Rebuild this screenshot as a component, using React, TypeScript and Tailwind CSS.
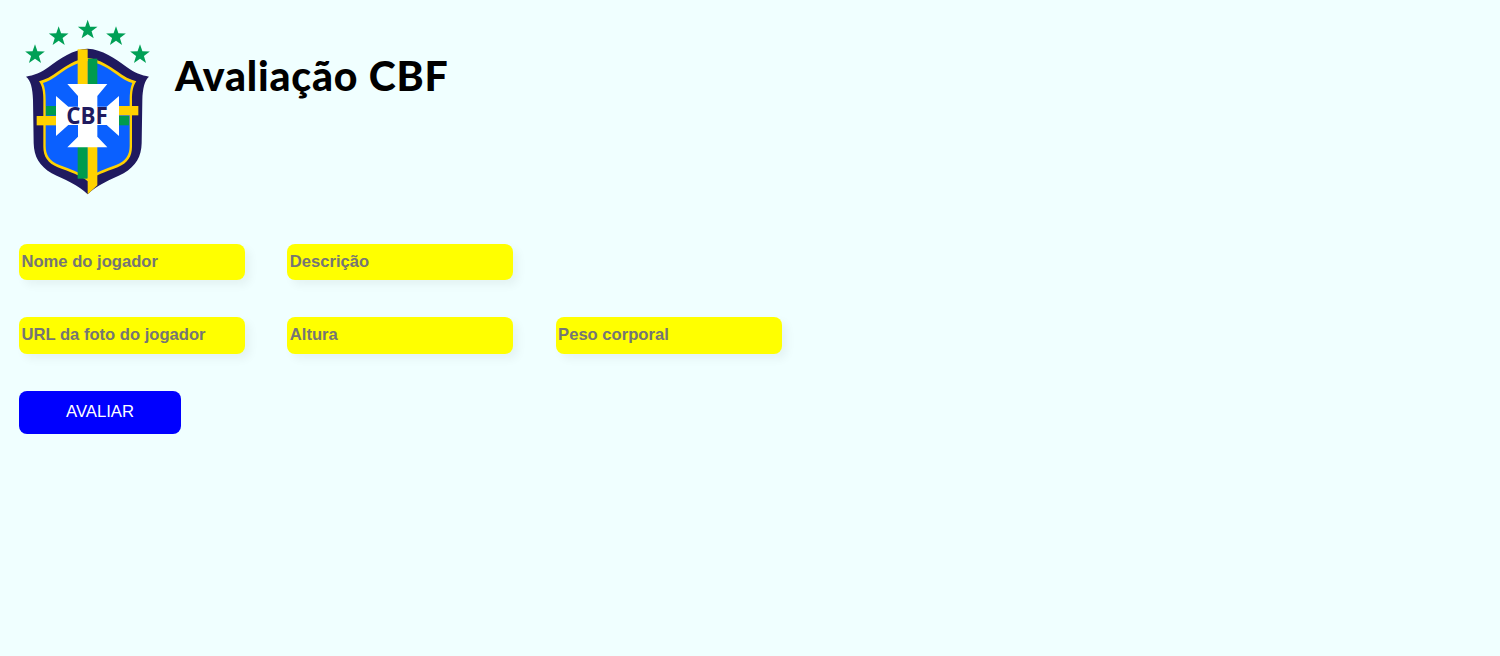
const star = (cx: number, cy: number, r: number) => {
  const pts: string[] = [];
  for (let i = 0; i < 10; i++) {
    const a = -Math.PI / 2 + (i * Math.PI) / 5;
    const rr = i % 2 === 0 ? r : r * 0.4;
    pts.push(`${(cx + rr * Math.cos(a)).toFixed(1)},${(cy + rr * Math.sin(a)).toFixed(1)}`);
  }
  return pts.join(" ");
};

function Logo() {
  return (
    <svg viewBox="27 27 414 534" className="w-[138px] h-[178px] shrink-0">
      {[[75, 134], [146, 80], [233, 60], [318, 80], [390, 134]].map(([x, y]) => (
        <polygon key={x} points={star(x, y, 31)} fill="#00a056" />
      ))}
      <path
        d="M233 116 C190 118 150 145 115 172 C95 187 70 197 48 200 C62 210 68 235 69 270 L71 400 C72 440 88 468 125 490 C165 510 205 525 233 553 C261 525 301 510 341 490 C378 468 394 440 395 400 L397 270 C398 235 404 210 417 200 C396 197 371 187 351 172 C316 145 276 118 233 116 Z"
        fill="#201a5f"
      />
      <path
        d="M233 144 C195 148 165 170 145 184 C125 199 105 210 87 214 C97 228 100 245 100 270 L100 410 C100 440 113 458 143 472 C180 486 212 496 233 514 C254 496 286 486 323 472 C353 458 366 440 366 410 L366 270 C366 245 369 228 379 214 C361 210 341 199 321 184 C301 170 271 148 233 144 Z"
        fill="#ffd200"
      />
      <path
        d="M233 153 C197 157 168 178 149 191 C130 205 113 215 99 219 C105 232 107 250 107 270 L107 408 C107 436 119 453 148 465 C182 478 210 488 233 504 C256 488 284 478 318 465 C347 453 359 436 359 408 L359 270 C359 250 361 232 367 219 C353 215 336 205 317 191 C298 178 269 157 233 153 Z"
        fill="#0a60ff"
      />
      <rect x="233" y="146" width="29" height="80" fill="#009b4d" />
      <rect x="203" y="118" width="30" height="108" fill="#ffd200" />
      <rect x="203" y="410" width="30" height="96" fill="#009b4d" />
      <polygon points="233,410 262,410 262,526 233,553" fill="#ffd200" />
      <rect x="108" y="288" width="32" height="28" fill="#009b4d" />
      <rect x="80" y="318" width="60" height="28" fill="#ffd200" />
      <rect x="325" y="288" width="60" height="28" fill="#ffd200" />
      <rect x="325" y="318" width="32" height="28" fill="#009b4d" />
      <polygon
        points="172,222 292,222 262,258 262,290 290,290 327,258 327,378 290,345 262,345 262,380 292,412 172,412 204,380 204,345 175,345 138,378 138,258 175,290 204,290 204,258"
        fill="#ffffff"
      />
      <text
        x="231"
        y="341"
        textAnchor="middle"
        fill="#201a5f"
        fontSize="67"
        fontWeight="700"
        fontFamily="'Open Sans', sans-serif"
      >
        CBF
      </text>
    </svg>
  );
}

const inputClass =
  "w-[226px] h-[36.4px] bg-[#ffff00] rounded-lg pl-[2.5px] text-[16.6px] font-bold font-['Liberation_Sans',Arial,sans-serif] text-black placeholder:text-[#757575] shadow-[5px_5px_10px_rgba(0,0,0,0.05)] outline-none";

export default function App() {
  return (
    <div className="min-h-screen bg-[#f0ffff] pl-[19px] pt-[19px] font-['Liberation_Sans',Arial,sans-serif]">
      <header className="flex items-start gap-[18px] h-[224.8px]">
        <Logo />
        <h1 className="mt-[28px] text-[41px] leading-[58px] font-black tracking-[0.8px] text-black font-['Lato',sans-serif]">
          Avaliação CBF
        </h1>
      </header>
      <form className="flex flex-col gap-[37px]">
        <div className="flex gap-[42.3px]">
          <input className={inputClass} placeholder="Nome do jogador" />
          <input className={inputClass} placeholder="Descrição" />
        </div>
        <div className="flex gap-[42.3px]">
          <input className={inputClass} placeholder="URL da foto do jogador" />
          <input className={inputClass} placeholder="Altura" />
          <input className={inputClass} placeholder="Peso corporal" />
        </div>
        <button
          type="button"
          className="w-[162px] h-[43px] bg-[#0000ff] rounded-lg text-white text-[16.7px] leading-[40px] pb-[1px] text-center"
        >
          AVALIAR
        </button>
      </form>
    </div>
  );
}
